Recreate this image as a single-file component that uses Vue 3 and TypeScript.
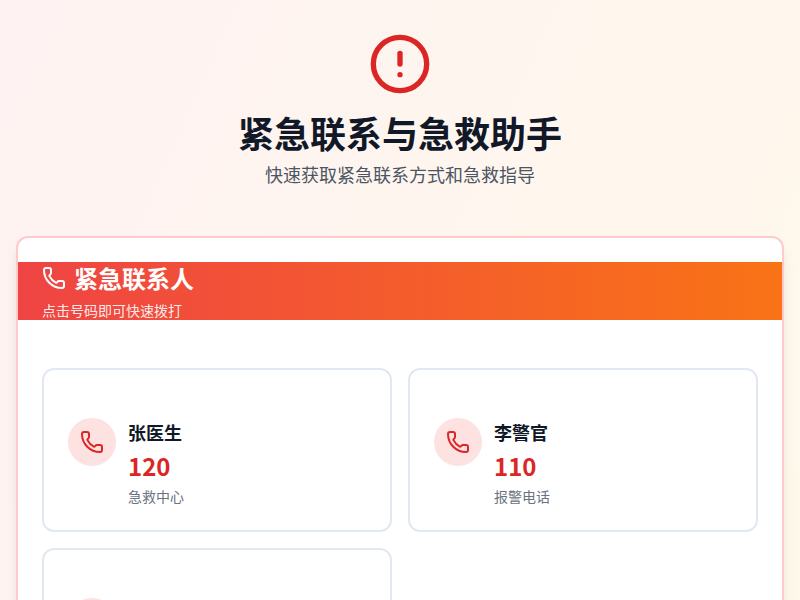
<template>
  <div class="page">
    <header class="hero">
      <svg class="hero-icon" viewBox="0 0 24 24" fill="none" stroke="currentColor" stroke-width="2" stroke-linecap="round" stroke-linejoin="round">
        <circle cx="12" cy="12" r="10" />
        <line x1="12" y1="8" x2="12" y2="12" />
        <line x1="12" y1="16" x2="12.01" y2="16" />
      </svg>
      <h1>紧急联系与急救助手</h1>
      <p>快速获取紧急联系方式和急救指导</p>
    </header>

    <section class="panel">
      <div class="panel-head">
        <h2>
          <svg class="phone" viewBox="0 0 24 24" fill="none" stroke="currentColor" stroke-width="2" stroke-linecap="round" stroke-linejoin="round">
            <path :d="phonePath" />
          </svg>
          紧急联系人
        </h2>
        <p>点击号码即可快速拨打</p>
      </div>
      <div class="contacts">
        <div v-for="(c, i) in contacts" :key="i" class="contact">
          <div class="contact-icon">
            <svg class="phone" viewBox="0 0 24 24" fill="none" stroke="currentColor" stroke-width="2" stroke-linecap="round" stroke-linejoin="round">
              <path :d="phonePath" />
            </svg>
          </div>
          <div class="contact-info">
            <div class="name">{{ c.name }}</div>
            <div class="number">{{ c.number }}</div>
            <div class="desc">{{ c.desc }}</div>
          </div>
        </div>
      </div>
    </section>
  </div>
</template>

<script setup lang="ts">
const phonePath =
  'M13.832 16.568a1 1 0 0 0 1.213-.303l.355-.465A2 2 0 0 1 17 15h3a2 2 0 0 1 2 2v3a2 2 0 0 1-2 2A18 18 0 0 1 2 4a2 2 0 0 1 2-2h3a2 2 0 0 1 2 2v3a2 2 0 0 1-.8 1.6l-.468.351a1 1 0 0 0-.292 1.233 14 14 0 0 0 6.392 6.384'

// the third card is cut off by the window, only its icon shows
const contacts = [
  { name: '张医生', number: '120', desc: '急救中心' },
  { name: '李警官', number: '110', desc: '报警电话' },
  { name: '', number: '', desc: '' }
]
</script>

<style scoped>
.page {
  height: 600px;
  overflow: hidden;
  box-sizing: border-box;
  padding: 32px 16px 0;
  background: linear-gradient(to bottom right, #fef2f2, #fff7ed, #fefce8) 0 0 / 100% 1800px no-repeat;
  font-family: "Noto Sans CJK SC", "Noto Sans", sans-serif;
}

.hero {
  display: flex;
  flex-direction: column;
  align-items: center;
  margin-bottom: 48px;
}

.hero-icon {
  width: 64px;
  height: 64px;
  color: #dc2626;
  margin-bottom: 16px;
}

.hero h1 {
  margin: 0 0 8px;
  font-size: 36px;
  line-height: 40px;
  font-weight: 700;
  color: #111827;
}

.hero p {
  margin: 0;
  font-size: 18px;
  line-height: 28px;
  color: #4b5563;
}

.panel {
  border: 2px solid #fecaca;
  border-radius: 12px;
  background: #fff;
  padding: 24px 0;
  box-shadow: 0 10px 15px -3px rgba(0, 0, 0, 0.1), 0 4px 6px -4px rgba(0, 0, 0, 0.1);
}

.panel-head {
  padding: 0 24px;
  height: 58px;
  color: #fff;
  background: linear-gradient(90deg, #ef4444, #f97316);
}

.panel-head h2 {
  display: flex;
  align-items: center;
  gap: 8px;
  margin: 0;
  font-size: 24px;
  line-height: 32px;
  font-weight: 700;
}

.panel-head p {
  margin: 6px 0 0;
  font-size: 14px;
  line-height: 20px;
  color: rgba(255, 255, 255, 0.9);
}

.phone {
  width: 24px;
  height: 24px;
  flex-shrink: 0;
}

.contacts {
  display: grid;
  grid-template-columns: 1fr 1fr;
  gap: 16px;
  padding: 48px 24px 0;
}

.contact {
  display: flex;
  align-items: flex-start;
  gap: 12px;
  padding: 48px 24px 24px;
  border: 2px solid #e2e8f0;
  border-radius: 12px;
}

.contact-icon {
  width: 48px;
  height: 48px;
  flex-shrink: 0;
  display: flex;
  align-items: center;
  justify-content: center;
  border-radius: 50%;
  background: #fee2e2;
  color: #dc2626;
}

.name {
  font-size: 18px;
  line-height: 28px;
  font-weight: 600;
  color: #111827;
}

.number {
  margin-top: 4px;
  font-size: 24px;
  line-height: 32px;
  font-weight: 700;
  color: #dc2626;
}

.desc {
  margin-top: 4px;
  font-size: 14px;
  line-height: 20px;
  color: #6b7280;
}
</style>
